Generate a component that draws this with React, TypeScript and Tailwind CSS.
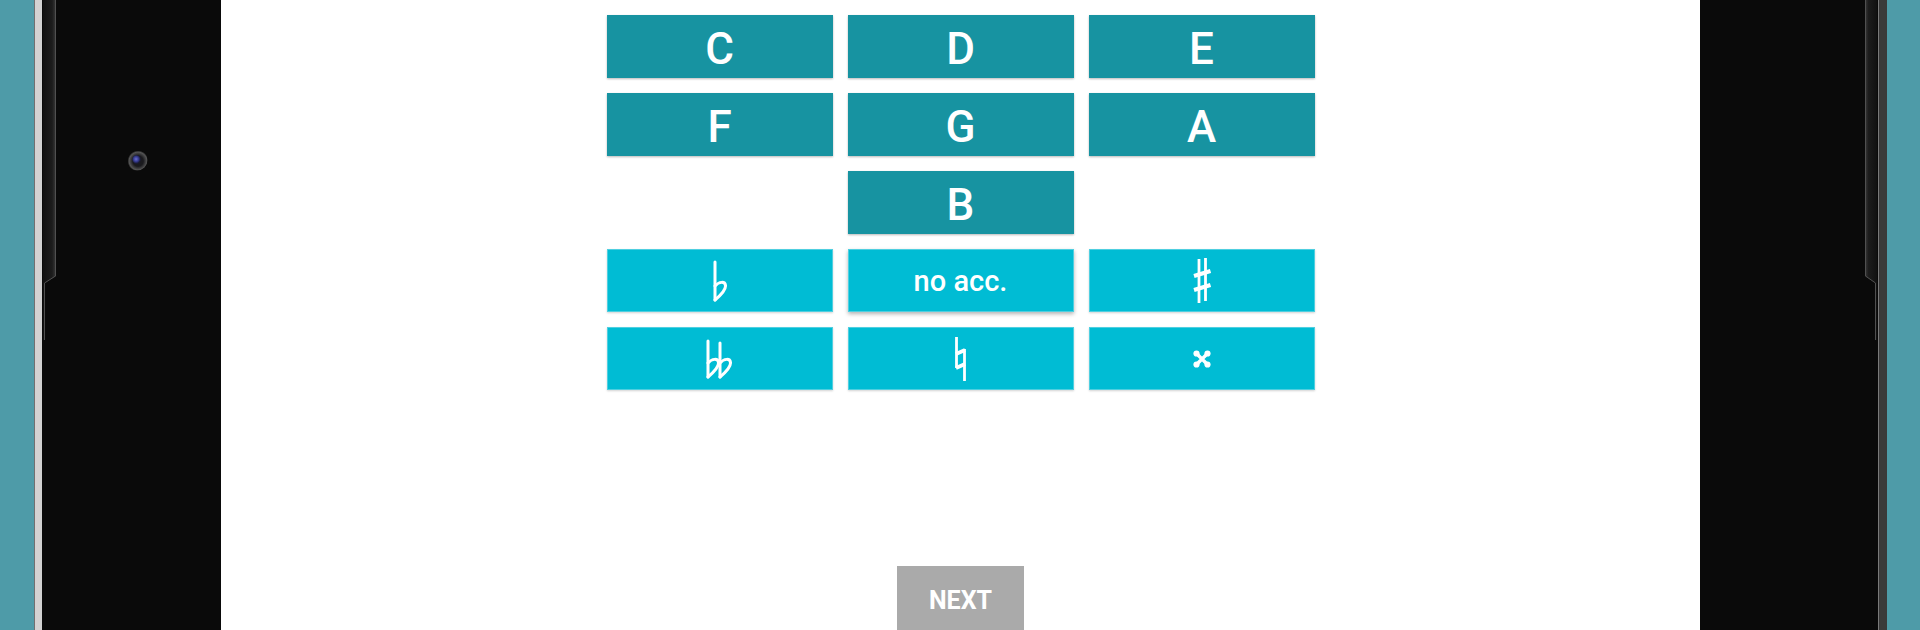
import React from "react";

const Flat = () => (
  <svg width="16" height="42" viewBox="0 0 16 42" fill="none" stroke="white" strokeWidth="3" strokeLinecap="round" strokeLinejoin="round">
    <path d="M3 2 V40" />
    <path d="M3 40 C9 35 14 30 13.5 25.5 C13 21 7 21.5 3 26" />
  </svg>
);

const DoubleFlat = () => (
  <svg width="30" height="40" viewBox="0 0 30 40" fill="none" stroke="white" strokeWidth="3" strokeLinecap="round" strokeLinejoin="round">
    <path d="M3 2 V38" />
    <path d="M3 38 C9 33 14 28 13.5 23.5 C13 19 7 19.5 3 24" />
    <path d="M15 4 V38" />
    <path d="M15 38 C21 33 26 28 25.5 23.5 C25 19 19 19.5 15 24" />
  </svg>
);

const Natural = () => (
  <svg width="13" height="46" viewBox="0 0 13 46" fill="none" stroke="white" strokeLinecap="butt">
    <path d="M2.5 1 V32" strokeWidth="2.8" />
    <path d="M10.5 13 V45" strokeWidth="2.8" />
    <path d="M2 18 L11 14" strokeWidth="3.8" />
    <path d="M2 32 L11 28" strokeWidth="3.8" />
  </svg>
);

const Sharp = () => (
  <svg width="20" height="47" viewBox="0 0 20 47" fill="none" stroke="white" strokeLinecap="butt">
    <path d="M7 2 V46" strokeWidth="2.8" />
    <path d="M13.5 1 V44" strokeWidth="2.8" />
    <path d="M2 19 L18.5 14" strokeWidth="4" />
    <path d="M2 33 L18.5 28" strokeWidth="4" />
  </svg>
);

const DoubleSharp = () => (
  <svg width="18" height="18" viewBox="0 0 18 18" fill="white" stroke="white">
    <path d="M4 4 L14 14 M14 4 L4 14" strokeWidth="3.4" />
    <circle cx="3.5" cy="3.5" r="3.1" stroke="none" />
    <circle cx="14.5" cy="3.5" r="3.1" stroke="none" />
    <circle cx="3.5" cy="14.5" r="3.1" stroke="none" />
    <circle cx="14.5" cy="14.5" r="3.1" stroke="none" />
  </svg>
);

const NoteBtn = ({ label }: { label: string }) => (
  <div className="h-[63px] bg-[#1793a1] shadow-[0_1px_2px_rgba(0,0,0,0.28)] flex items-center justify-center text-white text-[44px] font-medium leading-none pt-[5px]">
    {label}
  </div>
);

const AccBtn = ({ children, extraShadow }: { children: React.ReactNode; extraShadow?: boolean }) => (
  <div
    className={
      extraShadow
        ? "h-[63px] bg-[#00bcd4] border border-[#4fcfe0] shadow-[0_2px_4px_rgba(0,0,0,0.3)] flex items-center justify-center text-white"
        : "h-[63px] bg-[#00bcd4] border border-[#4fcfe0] shadow-[0_1px_2px_rgba(0,0,0,0.18)] flex items-center justify-center text-white"
    }
  >
    {children}
  </div>
);

export default function App() {
  return (
    <div
      className="h-[630px] w-full flex overflow-hidden bg-[#4e9ba8]"
      style={{ fontFamily: "Roboto, 'Noto Sans', sans-serif" }}
    >
      <div className="w-[34px] shrink-0 bg-[#4e9ba8]" />
      <div className="w-[8px] shrink-0 bg-[#d2d2d2] border-l border-[#707070]" />
      <div className="w-[179px] shrink-0 bg-[#0a0a0a] relative">
        <svg className="absolute left-0 top-0" width="20" height="345" viewBox="0 0 20 345">
          <defs>
            <linearGradient id="lg" x1="0" x2="1" y1="0" y2="0">
              <stop offset="0" stopColor="#111" />
              <stop offset="0.7" stopColor="#1c1c1c" />
              <stop offset="1" stopColor="#3a3a3a" />
            </linearGradient>
          </defs>
          <path d="M1 0 H14 V276 L3 283 V340 H1 Z" fill="url(#lg)" />
          <path d="M13.5 0 V276 L2.5 283 V340" fill="none" stroke="#505050" strokeWidth="1" />
        </svg>
        <svg className="absolute left-[84px] top-[149px]" width="22" height="22" viewBox="0 0 22 22">
          <defs>
            <radialGradient id="ring" cx="0.55" cy="0.55" r="0.5">
              <stop offset="0.5" stopColor="#1a1a1e" />
              <stop offset="0.85" stopColor="#555" />
              <stop offset="1" stopColor="#0a0a0a" />
            </radialGradient>
            <radialGradient id="lens" cx="0.45" cy="0.45" r="0.5">
              <stop offset="0" stopColor="#6a6fd0" />
              <stop offset="0.6" stopColor="#363b90" />
              <stop offset="1" stopColor="#1a1c3a" />
            </radialGradient>
          </defs>
          <circle cx="11" cy="11" r="10.5" fill="url(#ring)" />
          <circle cx="10.5" cy="10.5" r="4.2" fill="url(#lens)" />
        </svg>
      </div>

      <div className="w-[1479px] shrink-0 bg-white flex flex-col items-center">
        <div className="mt-[15px] grid grid-cols-[226px_226px_226px] gap-[15px]">
          <NoteBtn label="C" />
          <NoteBtn label="D" />
          <NoteBtn label="E" />
          <NoteBtn label="F" />
          <NoteBtn label="G" />
          <NoteBtn label="A" />
          <div />
          <NoteBtn label="B" />
          <div />
          <AccBtn>
            <Flat />
          </AccBtn>
          <AccBtn extraShadow>
            <span className="text-[29px] font-medium leading-none pt-[2px]">no acc.</span>
          </AccBtn>
          <AccBtn>
            <Sharp />
          </AccBtn>
          <AccBtn>
            <DoubleFlat />
          </AccBtn>
          <AccBtn>
            <Natural />
          </AccBtn>
          <AccBtn>
            <DoubleSharp />
          </AccBtn>
        </div>
        <div className="mt-[176px] w-[127px] h-[68px] shrink-0 bg-[#aaaaaa] flex items-center justify-center text-white text-[25px] font-bold leading-none">
          NEXT
        </div>
      </div>

      <div className="w-[178px] shrink-0 bg-[#0a0a0a] relative">
        <svg className="absolute right-0 top-0" width="20" height="345" viewBox="0 0 20 345">
          <defs>
            <linearGradient id="lg2" x1="1" x2="0" y1="0" y2="0">
              <stop offset="0" stopColor="#111" />
              <stop offset="0.7" stopColor="#1c1c1c" />
              <stop offset="1" stopColor="#3a3a3a" />
            </linearGradient>
          </defs>
          <path d="M19 0 H7 V276 L17 283 V340 H19 Z" fill="url(#lg2)" />
          <path d="M7.5 0 V276 L17.5 283 V340" fill="none" stroke="#505050" strokeWidth="1" />
        </svg>
      </div>
      <div className="w-[9px] shrink-0 bg-[#3a3a3a] border-l border-[#7a7a7a]" />
      <div className="flex-1 bg-[#4e9ba8]" />
    </div>
  );
}
